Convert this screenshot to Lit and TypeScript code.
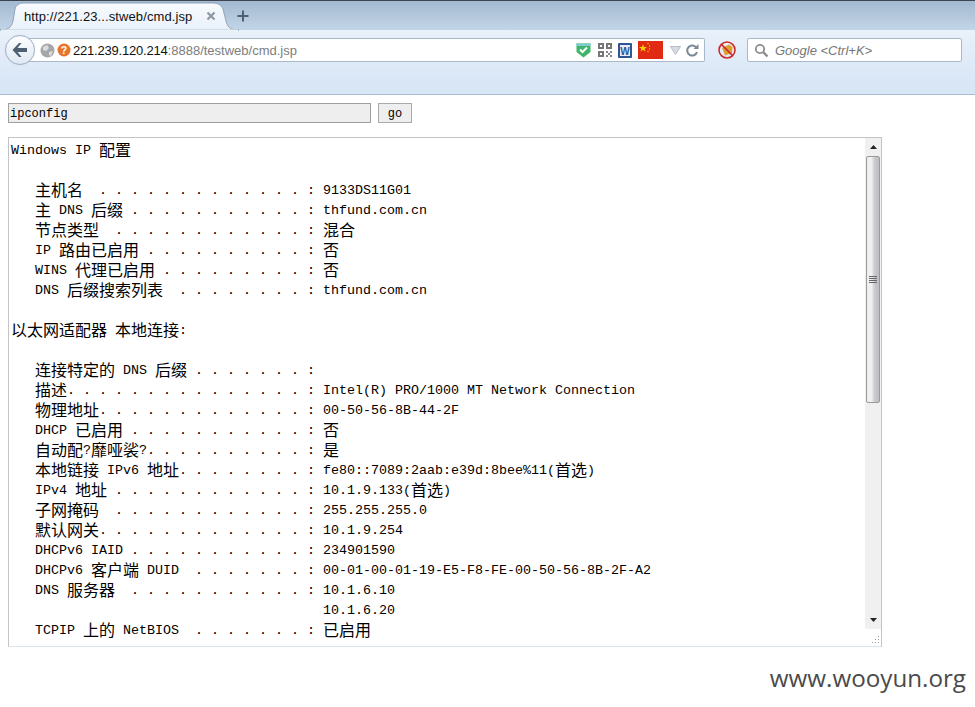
import { LitElement, html, css } from "lit";
import { customElement } from "lit/decorators.js";

const LINES = [
  "Windows IP 配置",
  "",
  "   主机名  . . . . . . . . . . . . . : 9133DS11G01",
  "   主 DNS 后缀 . . . . . . . . . . . : thfund.com.cn",
  "   节点类型  . . . . . . . . . . . . : 混合",
  "   IP 路由已启用 . . . . . . . . . . : 否",
  "   WINS 代理已启用 . . . . . . . . . : 否",
  "   DNS 后缀搜索列表  . . . . . . . . : thfund.com.cn",
  "",
  "以太网适配器 本地连接:",
  "",
  "   连接特定的 DNS 后缀 . . . . . . . :",
  "   描述. . . . . . . . . . . . . . . : Intel(R) PRO/1000 MT Network Connection",
  "   物理地址. . . . . . . . . . . . . : 00-50-56-8B-44-2F",
  "   DHCP 已启用 . . . . . . . . . . . : 否",
  "   自动配?靡哑裟?. . . . . . . . . . : 是",
  "   本地链接 IPv6 地址. . . . . . . . : fe80::7089:2aab:e39d:8bee%11(首选)",
  "   IPv4 地址 . . . . . . . . . . . . : 10.1.9.133(首选)",
  "   子网掩码  . . . . . . . . . . . . : 255.255.255.0",
  "   默认网关. . . . . . . . . . . . . : 10.1.9.254",
  "   DHCPv6 IAID . . . . . . . . . . . : 234901590",
  "   DHCPv6 客户端 DUID  . . . . . . . : 00-01-00-01-19-E5-F8-FE-00-50-56-8B-2F-A2",
  "   DNS 服务器  . . . . . . . . . . . : 10.1.6.10",
  "                                       10.1.6.20",
  "   TCPIP 上的 NetBIOS  . . . . . . . : 已启用",
];

@customElement("app-root")
export class AppRoot extends LitElement {
  static styles = css`
    :host { display: block; width: 975px; height: 707px; background: #fff; position: relative; overflow: hidden; font-family: "Liberation Sans", Arial, sans-serif; }
    .chrome { height: 95px; box-sizing: border-box; border-bottom: 1px solid #a9bdd4; background: linear-gradient(#e9f1fa 30px, #d8e6f6 85px); display: flex; flex-direction: column; }
    .tabs { height: 30px; box-sizing: border-box; border-top: 1px solid #3c4650; background: linear-gradient(#a3b9cf, #c3d5e8); display: flex; align-items: flex-end; position: relative; }
    .tabshape { position: absolute; left: 0; top: 0; }
    .tabtext { position: absolute; left: 24px; top: 8px; font-size: 13px; line-height: 15px; color: #111; letter-spacing: 0.1px; }
    .tabx { position: absolute; left: 206px; top: 10px; }
    .tabplus { position: absolute; left: 237px; top: 9px; }
    .nav { height: 40px; display: flex; align-items: flex-start; padding-top: 8px; box-sizing: border-box; position: relative; }
    .urlbar { margin-left: 18px; width: 687px; height: 24px; box-sizing: border-box; background: #fff; border: 1px solid #a9b8ca; border-left: none; border-radius: 2px; display: flex; align-items: center; padding-left: 22px; font-size: 13px; }
    .host { color: #111; margin-left: 2px; letter-spacing: -0.2px; }
    .rest { color: #7d7d7d; }
    .spacer { flex: 1; }
    .back { position: absolute; left: 5px; top: 5px; width: 30px; height: 30px; box-sizing: border-box; border-radius: 50%; border: 1px solid #9fb1c6; background: linear-gradient(#fdfeff, #dfe8f2); display: flex; align-items: center; justify-content: center; box-shadow: 0 0 1px #b9c7d6; }
    .ico { display: block; flex: none; }
    .urlicons { display: flex; align-items: center; margin-right: 5px; }
    .after { margin-left: 13px; margin-top: 3px; }
    .search { margin-left: 11px; width: 215px; height: 24px; box-sizing: border-box; background: #fff; border: 1px solid #a9b8ca; border-radius: 2px; display: flex; align-items: center; padding-left: 6px; font-style: italic; font-size: 13px; color: #777; gap: 6px; }
    .page { padding: 8px 0 0 8px; }
    .form { display: flex; align-items: flex-start; gap: 7px; height: 20px; }
    .input { width: 363px; height: 20px; box-sizing: border-box; border: 1px solid #a0a0a0; background: #eee; font: 12px/20px "Liberation Mono", monospace; padding-left: 1px; color: #000; }
    .go { width: 34px; height: 20px; box-sizing: border-box; border: 1px solid #aaa; background: #eee; font: 12px/20px "Liberation Mono", monospace; text-align: center; color: #000; }
    .area { margin-top: 14px; width: 874px; height: 510px; box-sizing: border-box; border: 1px solid #c4c4c4; border-bottom-color: #dbe3ec; display: flex; position: relative; }
    pre { margin: 0; flex: 1; height: 508px; overflow: hidden; padding-top: 3px; box-sizing: border-box; padding-left: 2px; font: 13.33px/20px "Liberation Mono", monospace; color: #000; }
    .l { display: block; height: 20px; white-space: pre; }
    .c { font: 16px/20px "Noto Sans CJK SC", sans-serif; display: inline-block; height: 20px; margin-top: -2px; vertical-align: top; }
    .sb { width: 16px; flex: none; background: #f0f0f0; display: flex; flex-direction: column; align-items: stretch; height: 491px; }
    .arrow { height: 18px; display: flex; align-items: center; justify-content: center; flex: none; }
    .thumb { height: 247px; margin: 0 1px; box-sizing: border-box; border: 1px solid #9a9a9a; border-radius: 2px; background: linear-gradient(90deg, #eee, #f2f2f2 35%, #c9c9cc 65%, #bdbdc2); display: flex; align-items: center; justify-content: center; flex: none; }
    .track { flex: 1; }
    .grip { position: absolute; right: 1px; bottom: 1px; }
    .wm { position: absolute; right: 9px; bottom: 14px; font: 24.2px/30px "Open Sans", "Noto Sans", sans-serif; color: #4a4a4a; }
  `;

  private line(text: string) {
    const parts = text.split(/([\u4e00-\u9fff]+)/);
    return html`<span class="l">${parts.map((p, i) => (i % 2 ? html`<span class="c">${p}</span>` : p))}</span>`;
  }

  render() {
    return html`
      <div class="chrome">
        <div class="tabs">
          <svg class="tabshape" width="240" height="30" viewBox="0 0 240 30">
            <defs><linearGradient id="t" x1="0" y1="0" x2="0" y2="1"><stop offset="0" stop-color="#f8fbfe"/><stop offset="1" stop-color="#e9f1fa"/></linearGradient></defs>
            <path d="M0 29 C8 29 11 27 13 20 L15 8 C16 4 19 2 24 2 L213 2 C218 2 221 4 223 8 L226 20 C228 27 231 29 239 29 Z" fill="url(#t)" stroke="#8fa3b8" stroke-width="1"/>
            <path d="M1 29.5 H238" stroke="#e9f1fa" stroke-width="2"/>
          </svg>
          <span class="tabtext">http://221.23...stweb/cmd.jsp</span>
          <svg class="tabx" width="10" height="10" viewBox="0 0 10 10"><path d="M1.5 1.5 L8.5 8.5 M8.5 1.5 L1.5 8.5" stroke="#8d97a3" stroke-width="2.2"/></svg>
          <svg class="tabplus" width="12" height="12" viewBox="0 0 12 12"><path d="M6 0.5 V11.5 M0.5 6 H11.5" stroke="#4f5f70" stroke-width="2"/></svg>
        </div>
        <div class="nav">
          <div class="urlbar">
            <svg class="ico" width="15" height="15" viewBox="0 0 15 15"><circle cx="7.5" cy="7.5" r="7" fill="#a5a7a9"/><path d="M3 4 L7 2 L9 5 L6 8 L3 7 Z M9 9 L13 8 L11 13 L9 12 Z" fill="#dcdcdc"/></svg>
            <svg class="ico" style="margin-left:2px" width="14" height="14" viewBox="0 0 14 14"><circle cx="7" cy="7" r="6.5" fill="#e8732a"/><text x="7" y="11" font-size="10.5" font-weight="700" font-family="Liberation Sans" fill="#fff" text-anchor="middle">?</text></svg>
            <span class="host">221.239.120.214</span><span class="rest">:8888/testweb/cmd.jsp</span>
            <span class="spacer"></span>
            <div class="urlicons">
              <svg class="ico" width="15" height="16" viewBox="0 0 15 16"><path d="M0.5 1.5 H14.5 V10 L7.5 15.5 L0.5 10 Z" fill="#3fb56b"/><path d="M0.5 1.5 H14.5 V4 H0.5 Z" fill="#7fcbd0"/><path d="M4 7.5 L6.5 10 L11 5.5" stroke="#fff" stroke-width="2" fill="none"/></svg>
              <svg class="ico" style="margin-left:7px" width="14" height="14" viewBox="0 0 14 14" shape-rendering="crispEdges"><path d="M0 0 H6 V6 H0 Z M8 0 H14 V6 H8 Z M0 8 H6 V14 H0 Z" fill="#777"/><path d="M2 2 H4 V4 H2 Z M10 2 H12 V4 H10 Z M2 10 H4 V12 H2 Z" fill="#fff"/><path d="M8 8 H10 V10 H8 Z M12 8 H14 V10 H12 Z M10 10 H12 V12 H10 Z M8 12 H10 V14 H8 Z M12 12 H14 V14 H12 Z" fill="#888"/></svg>
              <svg class="ico" style="margin-left:6px" width="14" height="15" viewBox="0 0 14 15"><rect x="0" y="0" width="14" height="15" rx="1" fill="#2f5597"/><rect x="2" y="2" width="10" height="11" fill="#e8edf5"/><text x="7" y="11.5" font-size="10" font-weight="700" font-family="Liberation Sans" fill="#2f5597" text-anchor="middle">W</text></svg>
              <svg class="ico" style="margin-left:6px" width="25" height="18" viewBox="0 0 25 18"><rect width="25" height="18" fill="#e02a12"/><path d="M5 3 L6 6 L9 6 L6.6 7.8 L7.5 10.5 L5 8.8 L2.5 10.5 L3.4 7.8 L1 6 L4 6 Z" fill="#f6d500"/><circle cx="10" cy="2.5" r=".7" fill="#f6d500"/><circle cx="11.5" cy="5" r=".7" fill="#f6d500"/><circle cx="11.5" cy="8" r=".7" fill="#f6d500"/><circle cx="10" cy="10.5" r=".7" fill="#f6d500"/></svg>
              <svg class="ico" style="margin-left:7px" width="11" height="9" viewBox="0 0 11 9"><path d="M0.5 0.5 H10.5 L5.5 8.5 Z" fill="#d8dde3" stroke="#b5bcc5"/></svg>
              <svg class="ico" style="margin-left:5px" width="13" height="13" viewBox="0 0 13 13"><path d="M10.5 4 A5 5 0 1 0 11 8" stroke="#7b8896" stroke-width="2" fill="none"/><path d="M7.5 5 H12.5 V0 Z" fill="#7b8896"/></svg>
            </div>
          </div>
          <svg class="ico after" width="18" height="18" viewBox="0 0 18 18"><path d="M4 7 L11 3.5 L14.5 6 L14 12 L7 14.5 Z" fill="#e0a030"/><circle cx="9" cy="9" r="8" fill="none" stroke="#cf2a2a" stroke-width="1.6"/><path d="M3.4 3.4 L14.6 14.6" stroke="#cf2a2a" stroke-width="1.6"/></svg>
          <div class="search">
            <svg class="ico" width="15" height="15" viewBox="0 0 15 15"><circle cx="6" cy="6" r="4.2" fill="none" stroke="#8c8c8c" stroke-width="1.8"/><path d="M9.2 9.2 L13.5 13.5" stroke="#8c8c8c" stroke-width="2.4"/></svg>
            <span>Google &lt;Ctrl+K&gt;</span>
          </div>
          <div class="back">
            <svg width="18" height="16" viewBox="0 0 18 16"><path d="M8 1 L1.5 8 L8 15 L10.5 15 L6.5 10 H16 V6 H6.5 L10.5 1 Z" fill="#4e5f72"/></svg>
          </div>
        </div>
      </div>
      <div class="page">
        <div class="form">
          <div class="input">ipconfig</div>
          <div class="go">go</div>
        </div>
        <div class="area">
          <pre>${LINES.map((l) => this.line(l))}</pre>
          <div class="sb">
            <div class="arrow"><svg width="7" height="4" viewBox="0 0 7 4"><path d="M3.5 0 L7 4 H0 Z" fill="#222"/></svg></div>
            <div class="thumb"><svg width="8" height="8" viewBox="0 0 8 8" shape-rendering="crispEdges"><path d="M0 0.5 H8 M0 2.5 H8 M0 4.5 H8 M0 6.5 H8" stroke="#666"/></svg></div>
            <div class="track"></div>
            <div class="arrow"><svg width="7" height="4" viewBox="0 0 7 4"><path d="M0 0 H7 L3.5 4 Z" fill="#222"/></svg></div>
          </div>
          <svg class="grip" width="10" height="10" viewBox="0 0 10 10" shape-rendering="crispEdges"><path d="M8 1 h1 v1 h-1 Z M5 4 h1 v1 h-1 Z M8 4 h1 v1 h-1 Z M2 7 h1 v1 h-1 Z M5 7 h1 v1 h-1 Z M8 7 h1 v1 h-1 Z" fill="#999"/></svg>
        </div>
      </div>
      <div class="wm">www.wooyun.org</div>
    `;
  }
}
